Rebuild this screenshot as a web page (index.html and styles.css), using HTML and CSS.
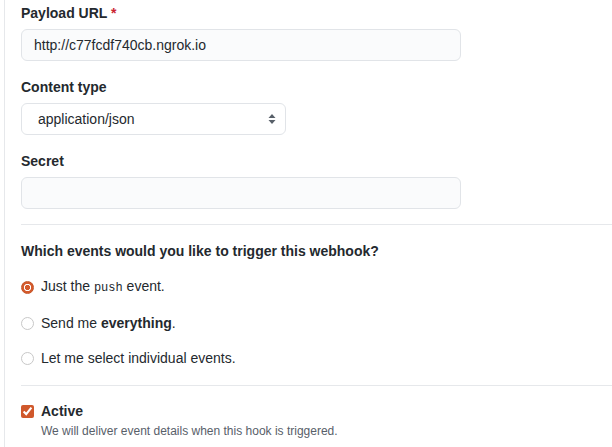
FILE: index.html
```html
<!DOCTYPE html>
<html lang="en">
<head>
<meta charset="utf-8">
<title>Webhook</title>
<link rel="stylesheet" href="styles.css">
</head>
<body>
<div class="panel">
  <div class="field">
    <label class="field-label" for="url">Payload URL <span class="req">*</span></label>
    <input id="url" class="text-input wide" type="text" value="http://c77fcdf740cb.ngrok.io">
  </div>
  <div class="field">
    <label class="field-label" for="ctype">Content type</label>
    <select id="ctype" class="select">
      <option>application/json</option>
      <option>application/x-www-form-urlencoded</option>
    </select>
  </div>
  <div class="field last">
    <label class="field-label" for="secret">Secret</label>
    <input id="secret" class="text-input wide" type="text" value="">
  </div>

  <div class="section">
    <h3 class="section-title">Which events would you like to trigger this webhook?</h3>
    <div class="options">
      <label class="option"><input class="radio" type="radio" name="ev" checked> <span>Just the <code class="code">push</code> event.</span></label>
      <label class="option"><input class="radio" type="radio" name="ev"> <span>Send me <strong>everything</strong>.</span></label>
      <label class="option"><input class="radio" type="radio" name="ev"> <span>Let me select individual events.</span></label>
    </div>
  </div>

  <div class="section active-section">
    <label class="check-row"><input class="checkbox" type="checkbox" checked> <span class="check-title">Active</span></label>
    <p class="note">We will deliver event details when this hook is triggered.</p>
  </div>
</div>
</body>
</html>
```

FILE: styles.css
```css
* { box-sizing: border-box; }

html, body {
  margin: 0;
  padding: 0;
  background: #ffffff;
}

body {
  font-family: "Liberation Sans", Arial, sans-serif;
  font-size: 14px;
  line-height: 21px;
  color: #24292e;
}

.panel {
  margin-left: 4px;
  border-left: 1px solid #e6e8eb;
  padding: 3px 0 0 16px;
  min-height: 100vh;
}

.field {
  margin-bottom: 16px;
}

.field.last {
  margin-bottom: 15px;
}

.field-label {
  display: block;
  font-weight: 700;
  margin-bottom: 5px;
}

.req {
  color: #cb2431;
}

.text-input,
.select {
  display: block;
  height: 32px;
  font-family: "Liberation Sans", Arial, sans-serif;
  font-size: 14px;
  color: #24292e;
  background-color: #fafbfc;
  border: 1px solid #e1e4e8;
  border-radius: 6px;
  outline: none;
}

.text-input {
  padding: 0 12px;
}

.wide {
  width: 440px;
}

.select {
  width: 265px;
  padding: 0 30px 0 16px;
  appearance: none;
  -webkit-appearance: none;
  background-color: #ffffff;
  background-image: url("data:image/svg+xml;utf8,<svg xmlns='http://www.w3.org/2000/svg' width='8' height='12' viewBox='0 0 8 12'><path d='M4 1 L7.5 5 H0.5 Z M4 11 L7.5 7 H0.5 Z' fill='%23586069'/></svg>");
  background-repeat: no-repeat;
  background-position: right 9px center;
  background-size: 8px 12px;
}

.section {
  border-top: 1px solid #e6e8eb;
  padding-top: 16px;
  padding-bottom: 16px;
}

.section-title {
  margin: 0 0 14px;
  font-size: 14px;
  line-height: 21px;
  font-weight: 700;
}

.options {
  display: flex;
  flex-direction: column;
  gap: 14px;
}

.option,
.check-row {
  display: flex;
  align-items: center;
  gap: 7px;
}

.radio {
  appearance: none;
  -webkit-appearance: none;
  width: 13px;
  height: 13px;
  margin: 0;
  border-radius: 50%;
  border: 1px solid #c8c8c8;
  background: #ffffff;
  flex: none;
}

.radio:checked {
  border: 1px solid #c65427;
  background: radial-gradient(circle, #d45a2c 0 2.4px, #ffffff 2.9px 3.4px, #d45a2c 3.9px);
}

.code {
  font-family: "Liberation Mono", "DejaVu Sans Mono", monospace;
  font-size: 12px;
}

.active-section {
  padding-top: 15px;
}

.checkbox {
  width: 13px;
  height: 13px;
  margin: 0;
  accent-color: #d0582b;
  flex: none;
}

.check-title {
  font-weight: 700;
}

.note {
  margin: 0;
  padding-left: 20px;
  font-size: 12px;
  line-height: 18px;
  color: #586069;
}
```
